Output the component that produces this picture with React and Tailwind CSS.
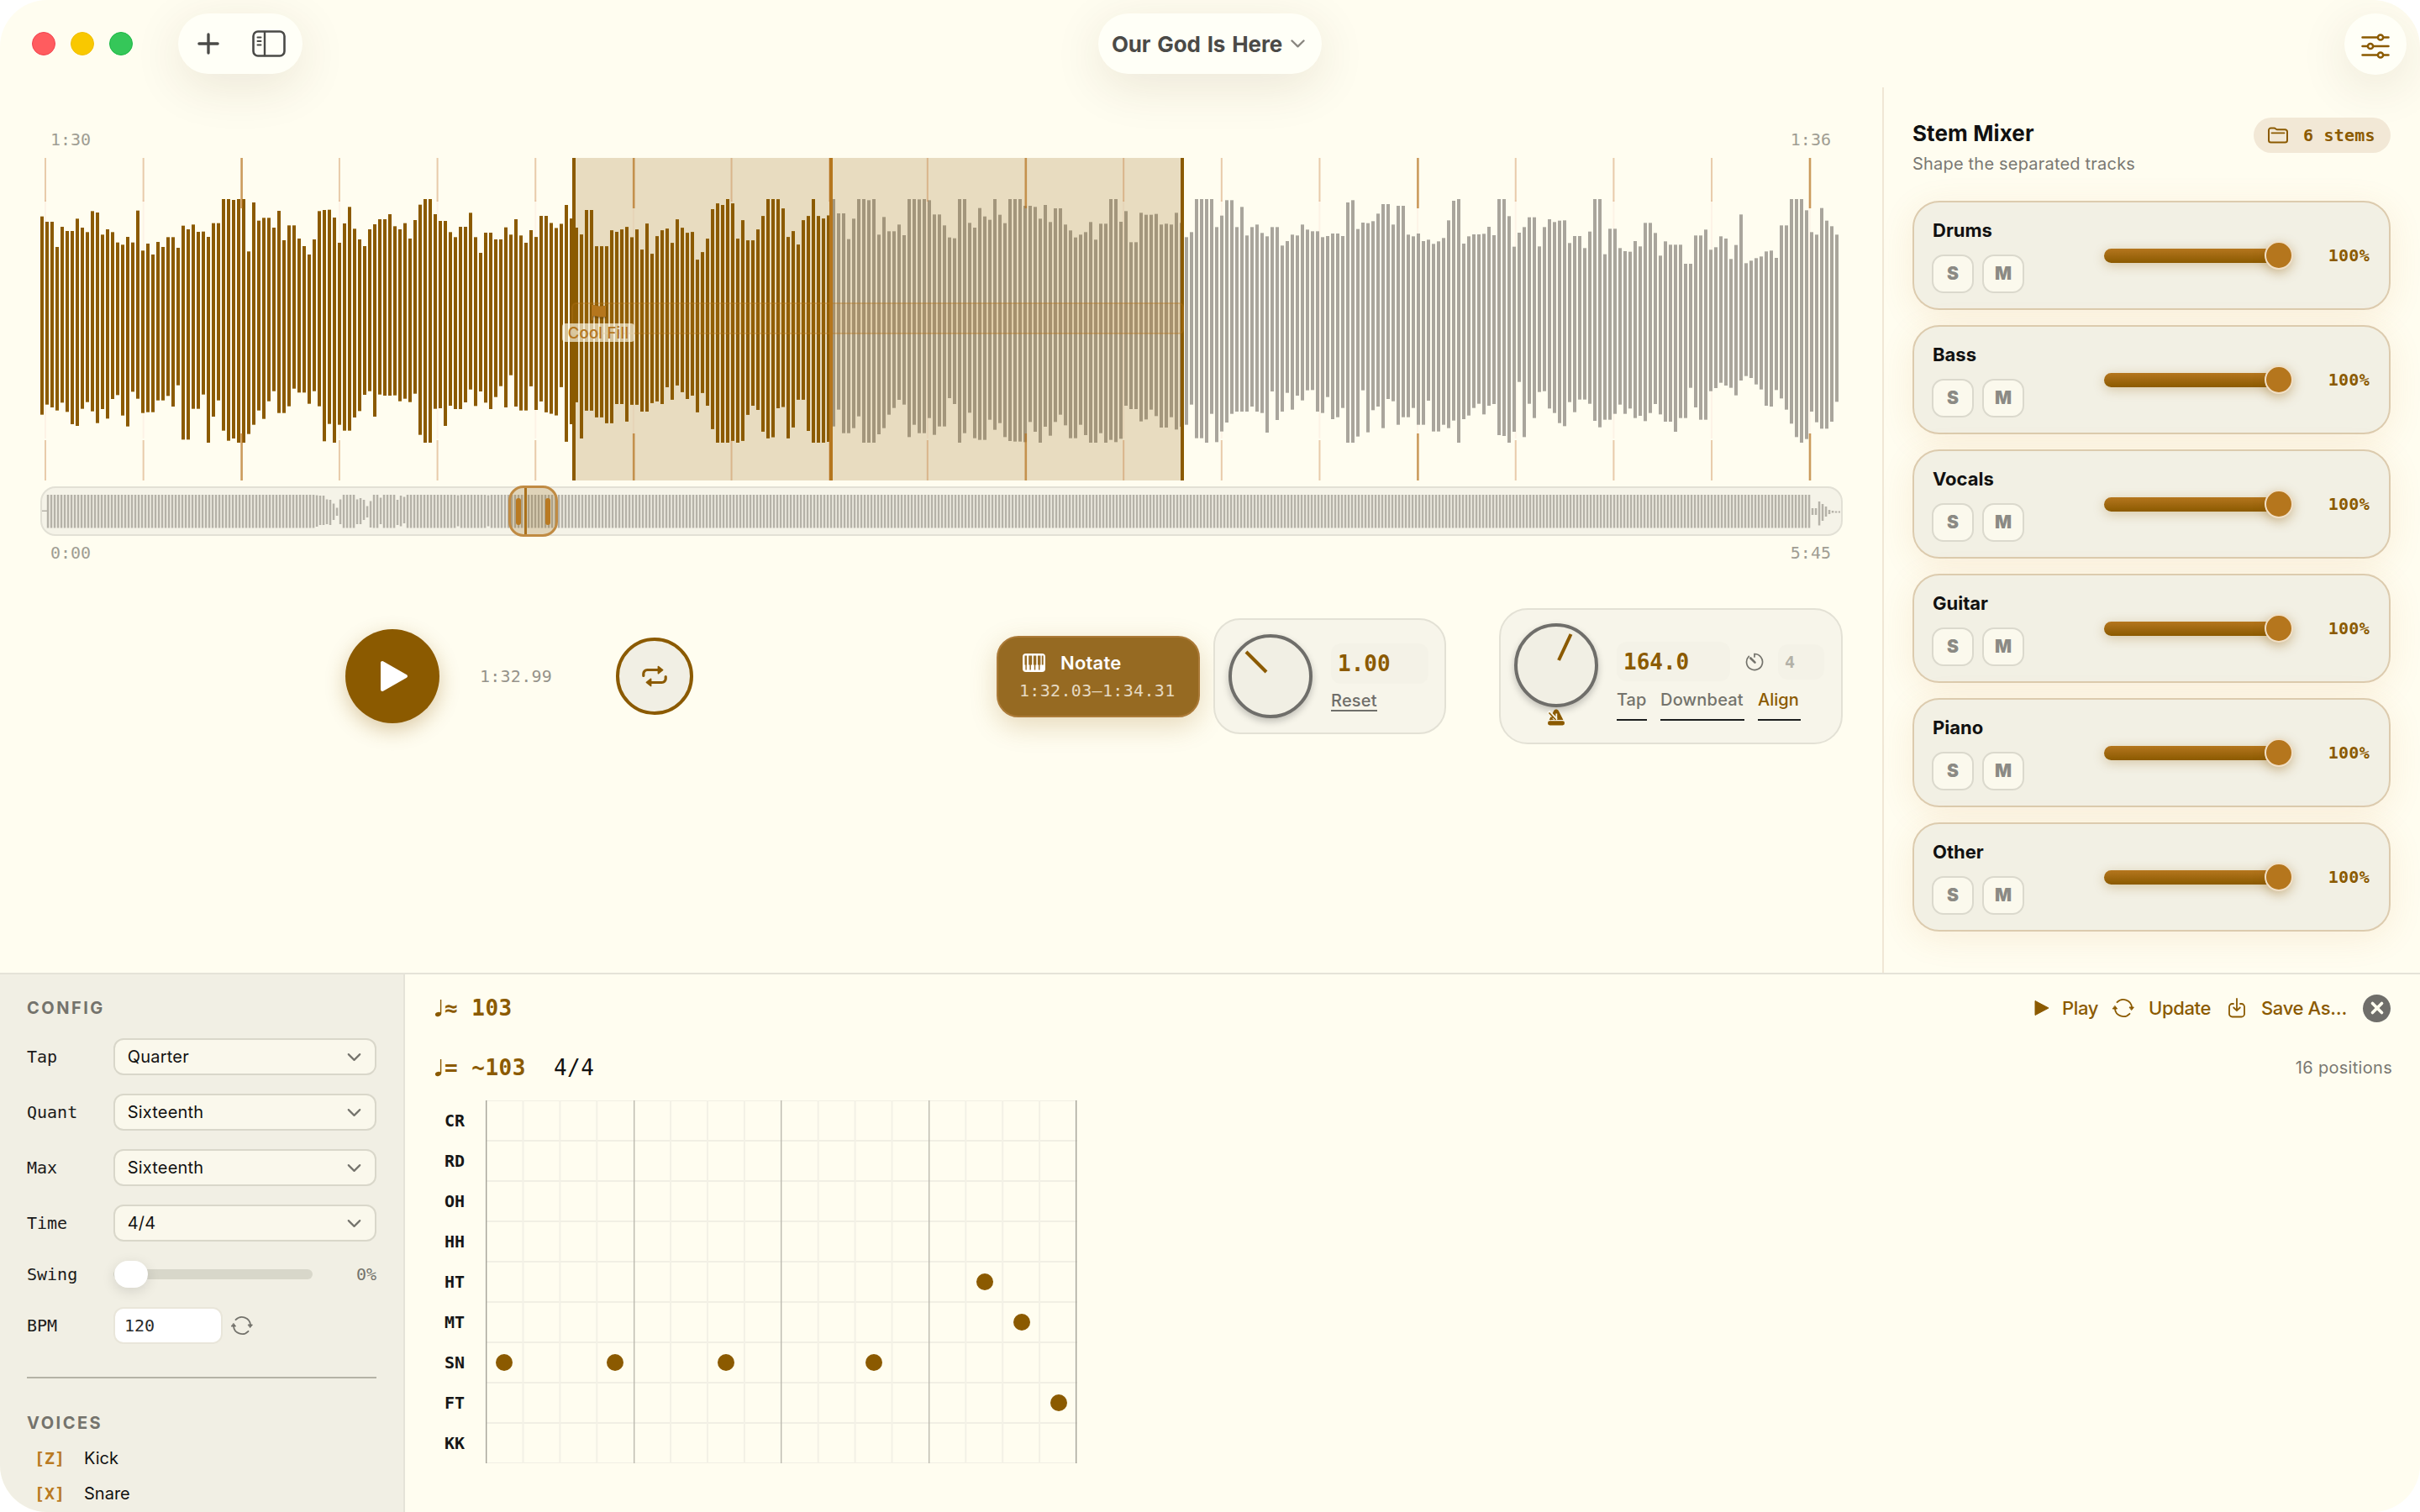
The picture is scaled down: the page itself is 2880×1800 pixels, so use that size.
import { Plus, ChevronDown, X } from 'lucide-react'

const MONO = "font-['DejaVu_Sans_Mono',monospace]"

// Peaks are stored in thirds of a pixel from the top of the track
const TOPS = [
  293, 312, 312, 402, 330, 345, 345, 301, 333, 349, 274, 279, 358, 339, 349, 386, 394, 366, 386, 272,
  415, 390, 429, 384, 402, 367, 367, 405, 326, 339, 322, 348, 347, 366, 317, 317, 231, 231, 234, 231,
  231, 418, 243, 308, 298, 298, 333, 273, 378, 325, 325, 372, 399, 429, 375, 274, 270, 269, 297, 387,
  318, 259, 337, 375, 399, 339, 321, 303, 303, 285, 328, 339, 317, 372, 306, 251, 231, 231, 285, 309,
  309, 349, 367, 330, 330, 280, 367, 423, 351, 351, 375, 375, 332, 358, 303, 361, 387, 342, 367, 291,
  291, 317, 335, 320, 252, 301, 333, 358, 270, 270, 400, 400, 400, 343, 348, 340, 331, 368, 340, 412,
  319, 427, 364, 343, 337, 388, 304, 334, 352, 349, 448, 421, 373, 267, 247, 252, 231, 247, 373, 307,
  379, 379, 340, 292, 231, 231, 232, 265, 367, 346, 394, 307, 292, 231, 292, 301, 290, 231, 282, 282,
  374, 301, 231, 231, 235, 231, 358, 295, 346, 346, 322, 360, 231, 231, 232, 231, 235, 286, 286, 325,
  368, 371, 231, 231, 316, 333, 263, 293, 305, 231, 287, 317, 231, 231, 231, 255, 255, 259, 301, 252,
  313, 264, 264, 322, 343, 368, 358, 349, 313, 376, 319, 319, 231, 231, 312, 274, 385, 385, 280, 287,
  287, 284, 322, 319, 322, 280, 316, 367, 349, 231, 231, 231, 231, 331, 290, 235, 235, 331, 259, 361,
  331, 322, 352, 364, 331, 331, 397, 381, 358, 361, 322, 340, 346, 346, 367, 363, 354, 354, 363, 243,
  235, 338, 315, 317, 310, 283, 249, 249, 322, 255, 255, 358, 364, 354, 381, 376, 391, 382, 370, 307,
  237, 231, 390, 364, 357, 357, 355, 330, 360, 231, 231, 292, 401, 351, 331, 296, 296, 400, 331, 303,
  313, 308, 307, 388, 363, 363, 406, 347, 231, 231, 428, 337, 337, 406, 417, 419, 381, 400, 316, 316,
  352, 433, 382, 394, 394, 394, 462, 462, 361, 361, 340, 412, 403, 364, 372, 445, 395, 286, 460, 451,
  442, 436, 418, 415, 441, 325, 325, 231, 231, 231, 271, 349, 358, 263, 308, 328, 358,
]

const BOTTOMS = [
  1001, 965, 975, 986, 958, 991, 1035, 1041, 980, 956, 989, 1031, 981, 1015, 945, 931, 1004, 1043, 919, 944,
  995, 992, 992, 950, 950, 934, 972, 896, 1090, 1090, 980, 980, 929, 1101, 1008, 950, 1058, 1094, 1086, 1101,
  1101, 1070, 1037, 986, 1016, 953, 917, 995, 995, 971, 908, 922, 922, 962, 917, 971, 1096, 1034, 1101, 1037,
  1058, 1058, 1011, 988, 930, 917, 1008, 929, 933, 933, 932, 953, 944, 956, 926, 1073, 1101, 1101, 980, 978,
  1041, 969, 981, 981, 957, 911, 970, 918, 958, 981, 938, 899, 975, 860, 972, 986, 986, 899, 984, 953,
  992, 997, 1003, 902, 1097, 1035, 956, 1086, 986, 986, 1010, 1010, 1031, 1031, 963, 963, 1025, 965, 965, 990,
  990, 959, 953, 963, 903, 947, 896, 920, 945, 933, 992, 923, 969, 1052, 1101, 1101, 1101, 1094, 1101, 1094,
  1001, 969, 984, 1061, 1085, 1081, 978, 973, 1085, 1046, 947, 947, 1059, 1101, 1101, 1101, 1098, 1043, 983, 1067,
  1067, 1049, 1007, 1101, 1101, 1101, 1071, 1049, 1001, 977, 948, 965, 1081, 1037, 1067, 1067, 1013, 1073, 1043, 1043,
  942, 963, 1101, 1067, 994, 1085, 1091, 1091, 1019, 1055, 1031, 1081, 1095, 1097, 1097, 1099, 1027, 1062, 1101, 1044,
  1076, 1027, 1001, 1039, 1085, 1085, 1037, 1074, 1101, 1101, 1067, 1101, 1091, 1099, 1087, 969, 981, 981, 1025, 1018,
  983, 1006, 1047, 1047, 1010, 1054, 1044, 1037, 965, 1085, 1085, 1101, 998, 1099, 1061, 1029, 998, 990, 990, 990,
  972, 990, 995, 1065, 918, 1020, 990, 923, 983, 933, 950, 914, 913, 990, 995, 938, 1017, 1010, 977, 1101,
  1101, 1079, 914, 1064, 985, 972, 1049, 945, 953, 1037, 1010, 1010, 977, 1037, 1037, 951, 1061, 1061, 1037, 1049,
  1022, 1101, 1017, 1004, 977, 962, 1000, 969, 963, 1074, 1077, 1101, 1062, 884, 1081, 962, 1013, 920, 917, 979,
  995, 1031, 1042, 956, 992, 947, 947, 962, 1023, 1046, 1019, 1019, 998, 965, 998, 979, 1013, 1005, 1024, 995,
  963, 1000, 1026, 1026, 1062, 1013, 1013, 905, 975, 1019, 1019, 917, 906, 887, 897, 905, 932, 879, 863, 870,
  893, 911, 969, 972, 913, 943, 983, 1033, 1081, 1101, 1088, 990, 1028, 1051, 1051, 1026, 955,
]

const PLAYED = 157

// Overview bars that are shorter than the rest, by index: [top, bottom]
const DIPS = {
  80: [9.5, 47], 81: [10, 45], 82: [10, 45], 83: [14.5, 44], 84: [15, 45], 85: [19.5, 39], 86: [24.5, 34], 87: [14.5, 44],
  92: [14.5, 44], 93: [13, 44], 94: [15, 39], 95: [22.5, 36], 96: [16.5, 48], 99: [12.5, 44], 104: [15, 45], 105: [10, 46.5], 106: [11.5, 43],
  122: [9.5, 46.5], 131: [9.5, 46.5],
  525: [25, 33], 526: [25, 33], 527: [17, 45.5], 528: [20, 40], 529: [23, 35], 530: [27, 32], 531: [28, 30.5], 532: [28.5, 30.5], 533: [28.5, 30.5],
}

const BEATS = Array.from({ length: 19 }, (_, i) => ({ x: 6 + i * 116.65, strong: i % 4 === 2 }))

const STEMS = ['Drums', 'Bass', 'Vocals', 'Guitar', 'Piano', 'Other']

const SELECTS = [
  ['Tap', 'Quarter'],
  ['Quant', 'Sixteenth'],
  ['Max', 'Sixteenth'],
  ['Time', '4/4'],
]

const ROWS = [
  { name: 'CR', hits: [] },
  { name: 'RD', hits: [] },
  { name: 'OH', hits: [] },
  { name: 'HH', hits: [] },
  { name: 'HT', hits: [13] },
  { name: 'MT', hits: [14] },
  { name: 'SN', hits: [0, 3, 6, 10] },
  { name: 'FT', hits: [15] },
  { name: 'KK', hits: [] },
]

function SidebarIcon() {
  return (
    <svg width="40" height="32" viewBox="0 0 40 32" fill="none" stroke="#4a4a47" strokeLinecap="round">
      <rect x="1.5" y="1.5" width="37" height="29" rx="5.5" strokeWidth="2.6" />
      <path d="M15 2v28" strokeWidth="2.4" />
      <path d="M6.5 8.5h4M6.5 13h4M6.5 17.5h4" strokeWidth="2" />
    </svg>
  )
}

function SlidersIcon() {
  return (
    <svg width="34" height="30" viewBox="0 0 34 30" stroke="#8b5a00" strokeWidth="2.5" strokeLinecap="round">
      <path d="M1.5 4.5h31M1.5 15h31M1.5 25.5h31" />
      <circle cx="23" cy="4.5" r="3.1" fill="#fffff7" />
      <circle cx="11" cy="15" r="3.1" fill="#fffff7" />
      <circle cx="23" cy="25.5" r="3.1" fill="#fffff7" />
    </svg>
  )
}

function FolderIcon() {
  return (
    <svg width="24" height="20" viewBox="0 0 24 20" fill="none" stroke="#8b5a00" strokeWidth="2" strokeLinejoin="round" strokeLinecap="round">
      <path d="M1 4a2.6 2.6 0 0 1 2.6-2.6h3.8c1.8 0 2 1.9 3.8 1.9h9A2.6 2.6 0 0 1 23 6v10a2.6 2.6 0 0 1-2.6 2.6H3.6A2.6 2.6 0 0 1 1 16z" />
      <path d="M4.5 7.3h15" strokeWidth="1.8" />
    </svg>
  )
}

function LoopIcon() {
  return (
    <svg width="30" height="26" viewBox="0 0 30 26" fill="none" stroke="#8b5a00" strokeWidth="3.2" strokeLinecap="round" strokeLinejoin="round">
      <path d="M1.8 12.5V10a4.5 4.5 0 0 1 4.5-4.5H19" />
      <path d="M28.2 13.5V16a4.5 4.5 0 0 1-4.5 4.5H11" />
      <path d="M19.5 1.6v8l5-4z" fill="#8b5a00" strokeWidth="1.8" />
      <path d="M10.5 16.4v8l-5-4z" fill="#8b5a00" strokeWidth="1.8" />
    </svg>
  )
}

function PianoIcon() {
  return (
    <svg width="27" height="22" viewBox="0 0 27 22">
      <rect width="27" height="22" rx="4" fill="white" />
      <path d="M2.5 2.5H5v11H2.5zM7.2 2.5h4v11h-4zM12.9 2.5h3.4v11h-3.4zM18 2.5h3.4v11H18zM22.8 2.5h1.9v11h-1.9z" fill="#966a22" />
      <path d="M3.4 13h1.4v6.500H3.4zM8.4 13h1.5v6.5H8.4zM13.8 13h1.5v6.5h-1.5zM19 13h1.5v6.5H19z" fill="#966a22" />
    </svg>
  )
}

function MetronomeIcon() {
  return (
    <svg width="22" height="20" viewBox="0 0 22 20">
      <path d="M2.6 13 8 2.6C8.8 1 9.8.5 11 .5s2.2.5 3 2.1L19.4 13z" fill="#8b5a00" />
      <rect x="1" y="14.3" width="20" height="5.2" rx="2.4" fill="#8b5a00" />
      <path d="M1.5 3 11 12.8" stroke="#f7f5ea" strokeWidth="4.4" />
      <path d="M11.3 5.5V13" stroke="#f7f5ea" strokeWidth="1.8" />
      <path d="M2.5 4.5 10.5 13M4 13l3-4" stroke="#8b5a00" strokeWidth="1.7" />
    </svg>
  )
}

function TimerIcon() {
  return (
    <svg width="22" height="22" viewBox="0 0 22 22" fill="none" stroke="#74736c" strokeWidth="1.7" strokeLinecap="round">
      <path d="M11 5V1.5a9.5 9.5 0 1 1-6.7 2.8" />
      <path d="M6.3 6.5 11.5 11.7" strokeWidth="2.6" />
    </svg>
  )
}

function SyncIcon({ color }) {
  return (
    <svg width="26" height="24" viewBox="0 0 26 24" fill="none" stroke={color} strokeWidth="1.8" strokeLinecap="round">
      <path d="M5.5 5.2a10.2 10.2 0 0 1 17.6 6.3" />
      <path d="M20.5 18.8A10.2 10.2 0 0 1 2.9 12.5" />
      <path d="M20.4 11h5l-2.5 3.3zM.6 13h5L3.1 9.7z" fill={color} strokeWidth="1" strokeLinejoin="round" />
    </svg>
  )
}

function SaveIcon() {
  return (
    <svg width="20" height="24" viewBox="0 0 20 24" fill="none" stroke="#8b5a00" strokeWidth="1.8" strokeLinecap="round" strokeLinejoin="round">
      <path d="M6 7H4.5A3.5 3.5 0 0 0 1 10.5V19a3.5 3.5 0 0 0 3.5 3.5h11A3.5 3.5 0 0 0 19 19v-8.5A3.5 3.5 0 0 0 15.5 7H14" />
      <path d="M10 1v14M6.2 11.5 10 15.2l3.8-3.7" />
    </svg>
  )
}

function Knob({ x1, y1, x2, y2 }) {
  return (
    <div className="size-[100px] shrink-0 rounded-full border-4 border-[#6f6e6a] bg-[#f1efe4] shadow-[0_4px_8px_rgba(0,0,0,0.22)]">
      <svg viewBox="0 0 92 92" className="size-full">
        <line x1={x1} y1={y1} x2={x2} y2={y2} stroke="#8b5a00" strokeWidth="4" />
      </svg>
    </div>
  )
}

function TitleBar() {
  return (
    <header className="flex h-[104px] shrink-0 items-start justify-between pl-[38px] pr-4 pt-4">
      <div className="flex w-[1269px] items-center">
        <div className="flex gap-[18px]">
          <span className="size-7 rounded-full border border-[#f04450] bg-[#ff5c5f]" />
          <span className="size-7 rounded-full border border-[#efbd05] bg-[#f9c800]" />
          <span className="size-7 rounded-full border border-[#1cb845] bg-[#35c759]" />
        </div>
        <div className="ml-[54px] flex h-[72px] w-[148px] items-center justify-between rounded-full bg-[#fffff7] pl-[17px] pr-[20px] shadow-[0_14px_60px_rgba(70,50,20,0.11)]">
          <Plus className="size-[38px] text-[#4a4a47]" strokeWidth={2.1} />
          <SidebarIcon />
        </div>
      </div>
      <button className="flex h-[72px] w-[266px] items-center justify-center gap-[10px] rounded-full bg-[#fffff7] pr-1 shadow-[0_14px_60px_rgba(70,50,20,0.11)]">
        <span className="pt-px text-[26px] font-bold leading-none tracking-[-0.15px] text-[#4b4a47] [word-spacing:2px]">Our God Is Here</span>
        <svg width="17" height="10" viewBox="0 0 17 10" fill="none" stroke="#8a8780" strokeWidth="2.4" strokeLinecap="round" strokeLinejoin="round">
          <path d="M1.5 1.5 8.5 8.3l7-6.8" />
        </svg>
      </button>
      <div className="flex w-[1291px] justify-end">
        <button className="flex h-[73px] w-[74px] items-center justify-center rounded-full bg-[#fffff7] pt-1 pr-px shadow-[0_14px_60px_rgba(70,50,20,0.11)]">
          <SlidersIcon />
        </button>
      </div>
    </header>
  )
}

function Waveform() {
  return (
    <div className="relative h-[384px]">
      <svg width="2144" height="384" viewBox="0 0 2144 384">
        {BEATS.map((b) => (
          <rect key={b.x} x={b.x - 1} y="50" width="2" height="284" fill="#fdf3e6" />
        ))}
        {TOPS.map((top, i) => (
          <rect
            key={i}
            x={i * 6}
            y={top / 3 - 28}
            width="4"
            height={(BOTTOMS[i] - top) / 3}
            fill={i < PLAYED ? '#8b5a00' : '#a9a59c'}
          />
        ))}
        <rect x="635" y="0" width="724" height="384" fill="#8b5a00" opacity=".2" />
        {TOPS.slice(97, PLAYED).map((top, j) => (
          <rect key={j} x={(j + 97) * 6} y={top / 3 - 28} width="4" height={(BOTTOMS[j + 97] - top) / 3} fill="#8b5a00" />
        ))}
        {BEATS.map((b) => (
          <g key={b.x} fill={b.strong ? '#b5701d' : '#bf722f'} opacity={b.strong ? 0.7 : 0.36}>
            <rect x={b.x - 1} y="0" width={b.strong ? 2.6 : 2} height={b.strong ? 60 : 52} />
            <rect x={b.x - 1} y={b.strong ? 328 : 336} width={b.strong ? 2.6 : 2} height={b.strong ? 56 : 48} />
          </g>
        ))}
        <rect x="633" y="0" width="4" height="384" fill="#8b5a00" />
        <rect x="1357" y="0" width="4" height="384" fill="#8b5a00" />
        <rect x="633" y="173" width="727" height="36" rx="5" fill="#b5761d" fillOpacity=".14" stroke="#b5761d" strokeOpacity=".35" strokeWidth="2" />
        <rect x="939" y="0" width="4" height="384" fill="#b5761d" />
        <g filter="drop-shadow(0 1px 1px rgba(60,40,0,.6))">
          <path d="M656 175c4-1 6 2 10 1.500 3-.4 5-.5 7-.5v13c-4 .5-6 1-9 0-3-.8-5-.8-6.500-.5v5H656z" fill="#b5761d" />
        </g>
      </svg>
      <span className="absolute left-[621px] top-[197px] flex h-[22px] w-[86px] items-center justify-center rounded-[4px] bg-[#fffdf0]/65 text-[18.5px] font-medium leading-none tracking-[0.25px] text-[#b5761d]">
        Cool Fill
      </span>
    </div>
  )
}

function Overview() {
  return (
    <div className="relative mt-[7px] h-[59px] rounded-[18px] border-2 border-[#e2e0d5] bg-[#f5f3e8]">
      <svg width="2140" height="55" viewBox="2 2 2140 55">
        <rect x="2" y="28.5" width="6" height="1.5" fill="#b5b2a8" />
        {Array.from({ length: 534 }, (_, i) => {
          const [top, bottom] = DIPS[i] || [9, 48.5]
          return <rect key={i} x={i * 4 + 7.8} y={top + 1} width="2.5" height={bottom - top} fill="#b5b2a8" />
        })}
      </svg>
      <div className="absolute -top-[3px] left-[555px] flex h-[61px] w-[59px] items-center justify-between rounded-[18px] border-[3px] border-[#c08b43] bg-[#8b5a00]/20 px-1.5">
        <span className="h-8 w-1.5 rounded-full bg-[#b97a22]" />
        <span className="h-8 w-1.5 rounded-full bg-[#b97a22]" />
        <span className="absolute left-4 top-0 h-full w-[3px] bg-[#a9701c]" />
      </div>
    </div>
  )
}

function Transport() {
  return (
    <div className="mt-[46px] flex h-[162px] items-center">
      <button className="ml-[363px] flex size-28 items-center justify-center rounded-full bg-[#8b5a00] shadow-[0_8px_24px_rgba(139,90,0,0.3)]">
        <svg width="34" height="38" viewBox="0 0 34 38" className="ml-1">
          <path d="M3 3v32L31 19z" fill="white" stroke="white" strokeWidth="4" strokeLinejoin="round" />
        </svg>
      </button>
      <span className={`${MONO} ml-12 w-[86px] text-[20px] leading-none tracking-[0.25px] text-[#96938a]`}>1:32.99</span>
      <button className="ml-[76px] flex size-[92px] items-center justify-center rounded-full border-4 border-[#8b5a00] bg-[#f1efe4]">
        <LoopIcon />
      </button>

      <button className="ml-[361px] flex h-[97px] w-[242px] flex-col justify-center gap-3 rounded-[26px] border-2 border-[#ab7a38] bg-[#966a22] pl-[25px] text-left shadow-[0_10px_32px_rgba(139,90,0,0.22)]">
        <span className="flex items-center gap-[18px] pl-[4px]">
          <PianoIcon />
          <span className="text-[22px] font-semibold leading-none tracking-[0.2px] text-white">Notate</span>
        </span>
        <span className={`${MONO} text-[20px] leading-none tracking-[0.33px] text-[#e6dac2]`}>1:32.03–1:34.31</span>
      </button>

      <div className="ml-4 flex h-[138px] w-[277px] items-center rounded-[32px] border-2 border-[#e3e1d5] bg-[#f7f5ea] pl-4">
        <Knob x1="17" y1="17" x2="41" y2="41" />
        <div className="ml-[22px] flex flex-col items-start pt-0.5">
          <span className={`${MONO} flex h-12 w-[116px] items-center rounded-xl bg-[#f4f2e7] pl-2 text-[26px] font-bold leading-none text-[#8b5a00]`}>1.00</span>
          <span className="mt-[10px] border-b-2 border-[#6f6e6a] pb-px text-[20px] font-medium leading-[20px] tracking-[0.2px] text-[#6f6e6a]">Reset</span>
        </div>
      </div>

      <div className="ml-[63px] flex h-[162px] w-[409px] items-start rounded-[34px] border-2 border-[#e3e1d5] bg-[#f7f5ea] pl-4 pt-[16px]">
        <div className="flex flex-col items-center gap-0.5">
          <Knob x1="63.5" y1="9" x2="49" y2="40" />
          <MetronomeIcon />
        </div>
        <div className="ml-[22px] pt-[22px]">
          <div className="flex items-center">
            <span className={`${MONO} flex h-[47px] w-[135px] items-center rounded-xl bg-[#f4f2e7] pl-2 text-[26px] font-bold leading-none text-[#8b5a00]`}>164.0</span>
            <span className="ml-[18px]">
              <TimerIcon />
            </span>
            <span className={`${MONO} ml-[17px] flex h-[42px] w-[55px] items-center rounded-xl bg-[#f4f2e7] pl-2 text-[20px] font-bold leading-none text-[#b3b1a7]`}>4</span>
          </div>
          <div className="mt-[11px] flex gap-4 text-[20px] font-medium leading-[22px]">
            <span className="h-[36px] w-[36px] border-b-2 border-[#1c1e1e] text-[#74736c]">Tap</span>
            <span className="h-[36px] w-[100px] border-b-2 border-[#1c1e1e] tracking-[0.2px] text-[#74736c]">Downbeat</span>
            <span className="h-[36px] w-[51px] border-b-2 border-[#1c1e1e] text-[#8b5a00]">Align</span>
          </div>
        </div>
      </div>
    </div>
  )
}

function StemCard({ name }) {
  return (
    <div className="flex h-[130px] items-center rounded-[32px] border-2 border-[#dccbae] bg-[#f2f0e4] pl-[21px] pr-[23px] shadow-[0_8px_40px_rgba(200,120,50,0.11)]">
      <div className="flex w-[205px] flex-col gap-[18px] pt-[3px]">
        <span className="pl-px text-[22px] font-bold leading-[22px] text-[#111]">{name}</span>
        <div className="flex gap-2.5">
          {['S', 'M'].map((l) => (
            <span key={l} className="flex h-[46px] w-[50px] items-center justify-center rounded-[14px] border-2 border-[#dbd9cd] bg-[#fbf9ed] text-[21px] font-black leading-none text-[#8b8a84]">
              {l}
            </span>
          ))}
        </div>
      </div>
      <div className="relative flex w-[225px] items-center">
        <div className="h-[17px] w-[212px] rounded-full bg-linear-to-b from-[#b5761d] to-[#8b5a00] shadow-[0_3px_14px_rgba(139,90,0,0.28)]" />
        <span className="absolute right-0 size-[34px] rounded-full border-2 border-[#f0dfc6] bg-[#b5761d] shadow-[0_4px_14px_rgba(139,90,0,0.35)]" />
      </div>
      <span className={`${MONO} ml-auto text-[20px] font-bold leading-none tracking-[0.3px] text-[#8b5a00]`}>100%</span>
    </div>
  )
}

function StemMixer() {
  return (
    <aside className="flex w-[640px] flex-col border-l-2 border-[#f0e7d5] pl-[34px] pr-[35px] pt-9">
      <div className="flex items-start justify-between">
        <div>
          <h2 className="pt-[6px] text-[26px] font-bold leading-[26px] tracking-[0.1px] text-[#111]">Stem Mixer</h2>
          <p className="mt-[12px] text-[20px] leading-[22px] tracking-[0.2px] text-[#7a7872]">Shape the separated tracks</p>
        </div>
        <div className="flex h-[42px] w-[163px] items-center rounded-full bg-[#f2e8d6] pl-[17px]">
          <FolderIcon />
          <span className={`${MONO} ml-[18px] text-[20px] font-bold leading-none tracking-[0.2px] text-[#8b5a00]`}>6 stems</span>
        </div>
      </div>
      <div className="mt-[33px] flex flex-col gap-[18px]">
        {STEMS.map((s) => (
          <StemCard key={s} name={s} />
        ))}
      </div>
    </aside>
  )
}

function Config() {
  return (
    <aside className="flex w-[482px] shrink-0 flex-col border-r-2 border-[#e5e3d8] bg-[#f1efe4] pl-8 pr-8 pt-[29px]">
      <h3 className="text-[20px] font-bold leading-[22px] tracking-[2.5px] text-[#74736c]">CONFIG</h3>
      <div className="mt-[25px] flex flex-col gap-[22px]">
        {SELECTS.map(([label, value]) => (
          <div key={label} className="flex items-center">
            <span className={`${MONO} w-[103px] text-[20px] leading-none text-[#1a1a1a]`}>{label}</span>
            <div className="flex h-11 w-[314px] items-center justify-between rounded-xl border-2 border-[#d9d7ca] bg-[#faf8ec] pl-[15px] pr-[11px] text-[20px] leading-none tracking-[0.2px] text-[#111]">
              {value}
              <ChevronDown className="size-[27px] text-[#74736c]" strokeWidth={1.9} />
            </div>
          </div>
        ))}
      </div>
      <div className="mt-[23px] flex h-8 items-center">
        <span className={`${MONO} w-[103px] text-[20px] leading-none text-[#1a1a1a]`}>Swing</span>
        <div className="relative flex w-[237px] items-center">
          <div className="h-3 w-full rounded-full bg-[#d8d7ca]" />
          <span className="absolute left-px h-8 w-10 rounded-full bg-white shadow-[0_4px_16px_rgba(0,0,0,0.12)]" />
        </div>
        <span className={`${MONO} ml-auto text-[20px] leading-none text-[#74736c]`}>0%</span>
      </div>
      <div className="mt-[23px] flex items-center">
        <span className={`${MONO} w-[103px] text-[20px] leading-none text-[#1a1a1a]`}>BPM</span>
        <div className={`${MONO} flex h-11 w-[130px] items-center rounded-xl border-2 border-[#e9e6da] bg-white pl-[11px] text-[20px] leading-none text-[#2a2a2a]`}>120</div>
        <span className="ml-2.5">
          <SyncIcon color="#74736c" />
        </span>
      </div>
      <hr className="mt-[39px] border-t-2 border-[#b5b3a6]" />
      <h3 className="mt-[42px] text-[20px] font-bold leading-[22px] tracking-[2.5px] text-[#74736c]">VOICES</h3>
      {[['[Z]', 'Kick'], ['[X]', 'Snare']].map(([key, voice]) => (
        <div key={key} className="mt-5 flex items-center pl-[9px] text-[20px] leading-[22px]">
          <span className={`${MONO} w-[59px] font-bold text-[#b97a22]`}>{key}</span>
          <span className="text-[#111]">{voice}</span>
        </div>
      ))}
    </aside>
  )
}

function Grid() {
  return (
    <div className="mt-[21px] flex">
      <div className="w-[61px]">
        {ROWS.map((r) => (
          <div key={r.name} className={`${MONO} flex h-12 items-center pl-3 text-[20px] font-bold leading-none text-[#161616]`}>
            {r.name}
          </div>
        ))}
      </div>
      <svg width="704" height="432" viewBox="0 0 704 432">
        {Array.from({ length: 10 }, (_, i) => (
          <rect key={i} x="0" y={i * 48 - 1} width="704" height="2" fill="#f1efe4" />
        ))}
        {Array.from({ length: 17 }, (_, i) => (
          <rect
            key={i}
            x={i % 4 ? i * 43.9 - 0.4 : Math.round(i * 43.9)}
            y="0"
            width={i % 4 ? 2 : 1.4}
            height="432"
            fill={i % 4 ? '#f3f1e6' : i % 16 ? '#bcbaaf' : '#a5a398'}
          />
        ))}
        {ROWS.map((r, row) =>
          r.hits.map((c) => <circle key={`${row}-${c}`} cx={22 + c * 44} cy={24 + row * 48} r="10" fill="#8b5a00" />)
        )}
      </svg>
    </div>
  )
}

function Note() {
  return (
    <svg width="12" height="24" viewBox="0 0 12 24" className="shrink-0">
      <ellipse cx="4.5" cy="19.5" rx="3.6" ry="2.5" fill="#8b5a00" transform="rotate(-15 4.5 19.5)" />
      <path d="M7.6 2v17" stroke="#8b5a00" strokeWidth="1.4" />
    </svg>
  )
}

function Notation() {
  return (
    <section className="flex flex-1 flex-col pl-[35px] pr-[35px] pt-[22px]">
      <div className="flex h-9 items-center justify-between">
        <div className={`${MONO} flex items-center text-[26px] font-bold leading-none tracking-[0.5px] text-[#8b5a00]`}>
          <Note />
          <span>≈ 103</span>
        </div>
        <div className="flex items-center text-[22px] leading-none tracking-[-0.35px] text-[#8b5a00]">
          <svg width="18" height="20" viewBox="0 0 18 20">
            <path d="M1 1.5v17L17 10z" fill="#8b5a00" stroke="#8b5a00" strokeLinejoin="round" />
          </svg>
          <span className="ml-[15px] w-[60px] font-medium">Play</span>
          <SyncIcon color="#8b5a00" />
          <span className="ml-[17px] w-[95px] font-medium">Update</span>
          <SaveIcon />
          <span className="ml-[19px] w-[121px] whitespace-nowrap font-medium">Save As…</span>
          <span className="flex size-[33px] items-center justify-center rounded-full bg-[#6f6e6a]">
            <X className="size-[22px] text-[#fffdf0]" strokeWidth={4} />
          </span>
        </div>
      </div>
      <div className="mt-[35px] flex h-9 items-center justify-between">
        <div className={`${MONO} flex items-center text-[26px] font-bold leading-none tracking-[0.5px] text-[#8b5a00]`}>
          <Note />
          <span>= ~103</span>
          <span className="ml-[33px] font-normal text-[#111]">4/4</span>
        </div>
        <span className="-mr-0.5 text-[20px] leading-none tracking-[0.3px] text-[#7a7872]">16 positions</span>
      </div>
      <Grid />
    </section>
  )
}

export default function App() {
  return (
    <div className="h-[1800px] w-[2880px] overflow-hidden bg-white font-[Inter,sans-serif]">
      <div className="flex size-full flex-col overflow-hidden rounded-[56px] bg-[#fffdf0]">
        <TitleBar />
        <div className="flex h-[1054px] shrink-0">
          <main className="w-[2240px] pl-12 pr-[47px]">
            <div className={`${MONO} flex h-[84px] items-center justify-between pl-3 pr-[14px] pt-10 text-[20px] leading-none text-[#a09d93]`}>
              <span>1:30</span>
              <span>1:36</span>
            </div>
            <Waveform />
            <Overview />
            <div className={`${MONO} flex h-10 items-center justify-between pl-3 pr-[14px] text-[20px] leading-none text-[#a09d93]`}>
              <span>0:00</span>
              <span>5:45</span>
            </div>
            <Transport />
          </main>
          <StemMixer />
        </div>
        <div className="flex min-h-0 flex-1 border-t-2 border-[#e5e3d8]">
          <Config />
          <Notation />
        </div>
      </div>
    </div>
  )
}
